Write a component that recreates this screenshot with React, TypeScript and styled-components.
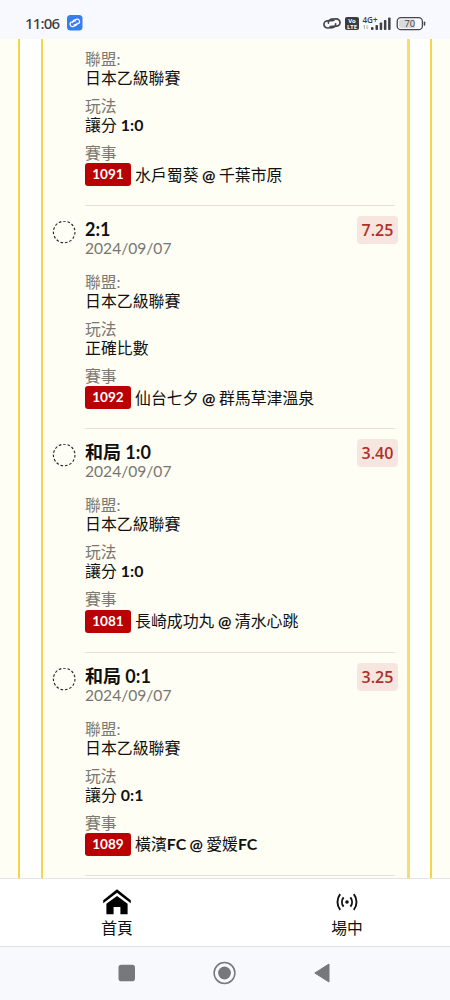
import React from 'react';
import styled, { createGlobalStyle } from 'styled-components';

const Global = createGlobalStyle`
  * { box-sizing: border-box; }
  body { margin: 0; background: #f8f9fe; font-family: Lato, "Noto Sans CJK TC", sans-serif; }
`;
const Phone = styled.div`
  width: 450px; height: 1000px; display: flex; flex-direction: column; overflow: hidden; color: #111;
`;
const StatusBar = styled.header`
  height: 39px; flex: none; display: flex; align-items: center; padding: 6px 24px 0 25px; background: #f8f9fe;
`;
const Clock = styled.span`
  font: 500 15px/20px "Noto Sans", sans-serif; color: #3d3e43; width: 42px; white-space: nowrap; letter-spacing: -.8px;
`;
const StatusIcons = styled.svg`margin-left: auto; display: block;`;
const Page = styled.main`
  height: 839px; flex: none; overflow: hidden; background: #fffef5; padding: 0 18px;
`;
const Frame = styled.div`
  height: 100%; background: #fff; border: solid #f4d742; border-width: 0 2px; padding: 0 20px 0 21px;
`;
const Card = styled.section`
  height: 100%; overflow: hidden; background: #fffef5; border: solid #f4d94c; border-width: 0 3px 0 2px;
  border-right-color: #f3de74; padding: 0 9px;
`;
const Item = styled.article`
  height: 223.25px; display: grid; grid-template-columns: 33px 1fr;
`;
const FirstItem = styled(Item)`height: 166px;`;
const Side = styled.div`padding-top: 16px;`;
const Ring = styled.svg`display: block;`;
const Body = styled.div<{ $first?: boolean }>`
  position: relative; padding-top: ${p => (p.$first ? '11px' : '14px')}; border-top: ${p => (p.$first ? '0' : '1px solid #e3e1da')};
  margin-right: 3px;
`;
const Title = styled.h2`
  margin: 0; font-size: 18px; font-weight: 700; line-height: 19px; height: 19px; color: #111;
`;
const DateLine = styled.div`
  font-size: 15.6px; line-height: 19px; height: 19px; color: #777671; margin-bottom: 15px;
`;
const Label = styled.div`font-size: 15.8px; line-height: 18px; height: 19px; color: #7a7873; font-weight: 400;`;
const Value = styled.div`font-size: 15.9px; line-height: 18px; height: 19px; margin-bottom: 9px; white-space: pre;`;
const Strong = styled.b`font-weight: 700;`;
const Match = styled.div`
  display: flex; align-items: center; height: 23px; margin-top: .25px; font-size: 15.9px; line-height: 20px; white-space: pre;
`;
const Teams = styled.span`height: 20px; word-spacing: -.6px;`;
const Code = styled.span`
  width: 46px; height: 23px; border-radius: 3px; background: #b90003; color: #fff; font-size: 13.6px; font-weight: 700;
  line-height: 23px; text-align: center; margin-right: 4px; flex: none;
`;
const Odds = styled.span`
  position: absolute; right: -3px; top: 10px; width: 41px; height: 28px; border-radius: 4px; background: #f7e6df;
  color: #ad3029; font: 600 16px/28px "Open Sans", sans-serif; text-align: center;
`;
const Tabs = styled.nav`
  height: 68px; flex: none; display: grid; grid-template-columns: 234px 1fr; background: #fff;
  border-top: 1px solid #e5e4e4; padding-top: 7px;
`;
const Tab = styled.a<{ $inset?: number }>`
  display: flex; flex-direction: column; align-items: center; font-size: 15.8px; line-height: 20px;
  padding-left: ${p => p.$inset || 0}px; color: #111;
`;
const TabIcon = styled.svg`display: block; width: 32px; height: 32px;`;
const SystemNav = styled.footer`
  flex: 1; background: #f7f9fd; border-top: 1px solid #dfe0e4; display: flex; justify-content: center; padding-top: 12px;
`;

type Part = string | { b: string };
const rich = (parts: Part[]) => parts.map((p, i) => (typeof p === 'string' ? p : <Strong key={i}>{p.b}</Strong>));

interface Bet { title?: string; odds?: string; play: Part[]; code: string; match: Part[] }
const bets: Bet[] = [
  { play: ['讓分 ', { b: '1:0' }], code: '1091', match: ['水戶蜀葵 ', { b: '@' }, ' 千葉市原'] },
  { title: '2:1', odds: '7.25', play: ['正確比數'], code: '1092', match: ['仙台七夕 ', { b: '@' }, ' 群馬草津溫泉'] },
  { title: '和局 1:0', odds: '3.40', play: ['讓分 ', { b: '1:0' }], code: '1081', match: ['長崎成功丸 ', { b: '@' }, ' 清水心跳'] },
  { title: '和局 0:1', odds: '3.25', play: ['讓分 ', { b: '0:1' }], code: '1089', match: ['橫濱', { b: 'FC @ ' }, '愛媛', { b: 'FC' }] },
];

const BetRow = ({ bet }: { bet: Bet }) => {
  const Row = bet.title ? Item : FirstItem;
  return (
    <Row>
      <Side>
        {bet.title && (
          <Ring width="24" height="24" viewBox="0 0 24 24">
            <circle cx="12.2" cy="11" r="10.8" fill="none" stroke="#222" strokeWidth="1.1" strokeDasharray="2.6 1.9" />
          </Ring>
        )}
      </Side>
      <Body $first={!bet.title}>
        {bet.title && <><Title>{bet.title}</Title><DateLine>2024/09/07</DateLine><Odds>{bet.odds}</Odds></>}
        <Label>聯盟:</Label>
        <Value>日本乙級聯賽</Value>
        <Label>玩法</Label>
        <Value>{rich(bet.play)}</Value>
        <Label>賽事</Label>
        <Match><Code>{bet.code}</Code><Teams>{rich(bet.match)}</Teams></Match>
      </Body>
    </Row>
  );
};

export default function App() {
  return (
    <Phone>
      <Global />
      <StatusBar>
        <Clock>11:06</Clock>
        <svg width="16" height="16" viewBox="0 0 16 16">
          <rect width="15.5" height="15.5" rx="3.5" fill="#387df0" />
          <g fill="none" stroke="#fff" strokeWidth="1.2" transform="rotate(-18 8 8)">
            <path d="M9.6 6H5.2a2.3 2.3 0 0 0 0 4.6h2.4a2.3 2.3 0 0 0 2.3-2.3" />
            <path d="M6.2 9.6h4.4a2.3 2.3 0 0 0 0-4.6H8.2a2.3 2.3 0 0 0-2.3 2.3" />
          </g>
        </svg>
        <StatusIcons width="104" height="20" viewBox="322 12 104 20">
          <g fill="none" stroke="#45464b" strokeWidth="1.7" strokeLinecap="round" transform="rotate(-4 332 22.5)">
            <path d="M334 19.5h-6.5a3.6 3.6 0 0 0 0 7.2h4.5a3.6 3.6 0 0 0 3.6-3.6" />
            <path d="M330 25.4h6.5a3.6 3.6 0 0 0 0-7.2H332a3.6 3.6 0 0 0-3.6 3.6" />
          </g>
          <rect x="345" y="16" width="14" height="13" rx="2" fill="#3b3c41" />
          <g fontFamily="Open Sans, sans-serif" fontWeight="700">
            <text x="352" y="22" textAnchor="middle" fontSize="6" fill="#fff">Vo</text>
            <text x="352" y="28" textAnchor="middle" fontSize="5.8" fill="#fff">LTE</text>
            <text x="362.5" y="22" fontSize="8" fontWeight="600" fill="#3b3c41" textLength="15" lengthAdjust="spacingAndGlyphs">4G+</text>
          </g>
          <path d="M364.5 28v-4l-1.2 1.5M367 24v4l1.2-1.5" stroke="#aaabb0" strokeWidth=".8" fill="none" />
          <g fill="#3f4045">
            <rect x="371" y="26" width="2.5" height="3" rx=".8" /><rect x="375.5" y="24" width="2.5" height="5" rx=".8" />
            <rect x="379.7" y="21.5" width="2.5" height="7.5" rx=".8" /><rect x="383.9" y="19" width="2.5" height="10" rx=".8" />
            <rect x="388.1" y="16.5" width="2.5" height="12.5" rx=".8" />
          </g>
          <rect x="397.2" y="16.7" width="25.2" height="12" rx="3.8" fill="none" stroke="#45464b" strokeWidth="1.3" />
          <path d="M401 18.5h14v8.4h-14a2 2 0 0 1-2-2v-4.4a2 2 0 0 1 2-2z" fill="#dadbdd" />
          <path d="M424.5 21.3v2.8" stroke="#45464b" strokeWidth="1.5" strokeLinecap="round" />
          <text x="409.8" y="26" textAnchor="middle" fontFamily="Open Sans, sans-serif" fontWeight="500" fontSize="9.2" fill="#3b3c41">70</text>
        </StatusIcons>
      </StatusBar>
      <Page>
        <Frame>
          <Card>
            {bets.map(b => <BetRow key={b.code} bet={b} />)}
            <Item><Side /><Body /></Item>
          </Card>
        </Frame>
      </Page>
      <Tabs>
        <Tab>
          <TabIcon viewBox="0 0 32 32">
            <path d="M2.2 14.2 16 3.3l13.8 10.9v3L16 6.8 2.2 17.2z" fill="#000" />
            <path d="M16 9.9 26.6 17.8V28.2H19.4v-7.1h-6.8v7.1H5.4V17.8z" fill="#000" />
          </TabIcon>
          首頁
        </Tab>
        <Tab $inset={10}>
          <TabIcon viewBox="0 0 32 32">
            <g fill="none" stroke="#111" strokeWidth="1.9">
              <path d="M9.2 8.2a12.5 12.5 0 0 0 0 15.6M22.8 8.2a12.5 12.5 0 0 1 0 15.6M12.6 11.3a7.5 7.5 0 0 0 0 9.4M19.4 11.3a7.5 7.5 0 0 1 0 9.4" />
            </g>
            <circle cx="16" cy="16" r="1.8" fill="#111" />
          </TabIcon>
          場中
        </Tab>
      </Tabs>
      <SystemNav>
        <svg width="220" height="28" viewBox="115 959 220 28">
          <rect x="118.5" y="964.7" width="16.5" height="16.5" rx="2.8" fill="#77787b" />
          <circle cx="224.5" cy="973" r="10.4" fill="none" stroke="#77787b" strokeWidth="1.5" />
          <circle cx="224.5" cy="973" r="6.4" fill="#77787b" />
          <path d="M314.8 973 329 964v18z" fill="#77787b" stroke="#77787b" strokeWidth="1" strokeLinejoin="round" />
        </svg>
      </SystemNav>
    </Phone>
  );
}
